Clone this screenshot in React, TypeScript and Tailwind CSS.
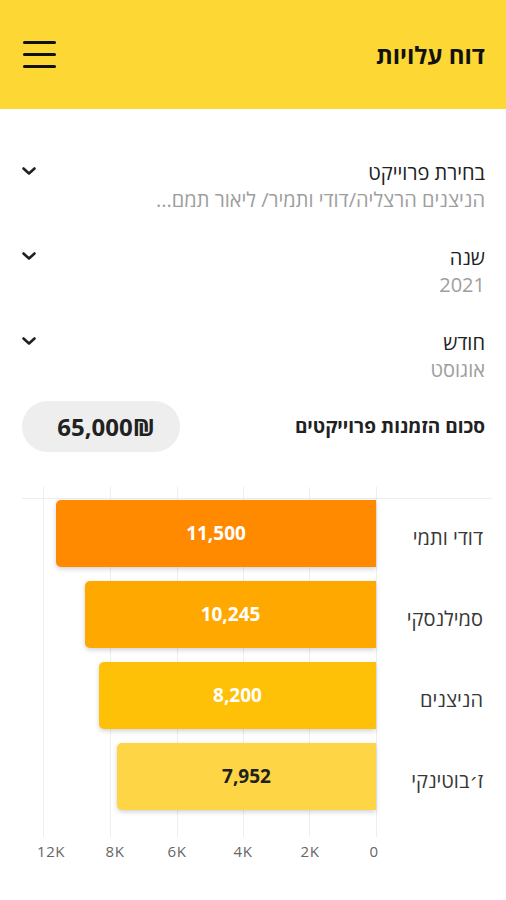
import React from "react"

interface Bar {
  label: string
  value: string
  width: number
  color: string
  textColor: string
}

const bars: Bar[] = [
  { label: "דודי ותמי", value: "11,500", width: 320, color: "bg-[#FF8A00]", textColor: "text-white" },
  { label: "סמילנסקי", value: "10,245", width: 291, color: "bg-[#FFA800]", textColor: "text-white" },
  { label: "הניצנים", value: "8,200", width: 277, color: "bg-[#FFC107]", textColor: "text-white" },
  { label: "ז׳בוטינקי", value: "7,952", width: 259, color: "bg-[#FDD545]", textColor: "text-[#212121]" },
]

// x positions inside the chart box (chart starts at page x=22)
const gridX = [21, 88, 155, 221, 287, 354]
const ticks = [
  { label: "12K", x: 29 },
  { label: "8K", x: 93 },
  { label: "6K", x: 155 },
  { label: "4K", x: 221 },
  { label: "2K", x: 288 },
  { label: "0", x: 352 },
]

const font = { fontFamily: '"Open Sans", "Noto Sans", "DejaVu Sans", sans-serif' }

function Chevron() {
  return (
    <svg width="14" height="10" viewBox="0 0 14 10" className="mt-[8px] shrink-0">
      <path d="M1.5 2.5 L7 7.5 L12.5 2.5" fill="none" stroke="#212121" strokeWidth="2.6" strokeLinecap="round" strokeLinejoin="round" />
    </svg>
  )
}

function Select({ label, value }: { label: string; value: string }) {
  return (
    <div className="flex items-start justify-between">
      <div className="flex flex-col">
        <span className="text-[20px] leading-[30px] text-[#212121]">{label}</span>
        <span className="-mt-[3px] text-[20px] leading-[30px] text-[#9E9E9E]">{value}</span>
      </div>
      <Chevron />
    </div>
  )
}

function Chart() {
  return (
    <div className="relative ml-[22px] mr-[14px] h-[380px]" dir="ltr">
      <svg className="absolute inset-0" width="470" height="350">
        <line x1="0" y1="11.5" x2="470" y2="11.5" stroke="#EEEEEE" strokeWidth="1" />
        {gridX.map((x) => (
          <line key={x} x1={x + 0.5} y1="0" x2={x + 0.5} y2="350" stroke="#EEEEEE" strokeWidth="1" />
        ))}
      </svg>
      <div className="relative flex flex-col gap-[14px] pt-[13px]">
        {bars.map((b) => (
          <div key={b.label} className="flex h-[67px] items-stretch">
            <div className="flex w-[354px] justify-end">
              <div
                className={`${b.color} ${b.textColor} flex items-center justify-center rounded-l-[5px] text-[19px] font-bold shadow-[0_2px_5px_rgba(0,0,0,0.18)]`}
                style={{ width: b.width }}
              >
                {b.value}
              </div>
            </div>
            <div className="flex flex-1 items-center justify-end pt-[8px] pr-[9px] text-[20px] text-[#383838]">
              <span dir="rtl">{b.label}</span>
            </div>
          </div>
        ))}
      </div>
      <div className="relative mt-[31px] h-5">
        {ticks.map((t) => (
          <span
            key={t.label}
            className="absolute top-0 -translate-x-1/2 text-[15px] leading-5 tracking-[0.5px] text-[#666666]"
            style={{ left: t.x }}
          >
            {t.label}
          </span>
        ))}
      </div>
    </div>
  )
}

export default function App() {
  return (
    <div className="min-h-[900px] w-[506px] bg-white" dir="rtl" style={font}>
      <header className="flex h-[109px] items-center justify-between bg-[#FDD835] pr-[21px] pl-[23px]">
        <h1 className="text-[24px] font-bold text-[#111111]">דוח עלויות</h1>
        <div className="flex w-[33px] flex-col gap-[9px]">
          <span className="h-[3px] rounded-full bg-[#111111]" />
          <span className="h-[3px] rounded-full bg-[#111111]" />
          <span className="h-[3px] rounded-full bg-[#111111]" />
        </div>
      </header>

      <main className="flex flex-col pr-[21px] pl-[22px] pt-[49px]">
        <div className="flex flex-col gap-[28px]">
          <Select label="בחירת פרוייקט" value="הניצנים הרצליה/דודי ותמיר/ ליאור תמם..." />
          <Select label="שנה" value="2021" />
          <Select label="חודש" value="אוגוסט" />
        </div>

        <div className="mt-[16px] flex items-center justify-between">
          <span className="text-[19px] font-bold text-[#212121]">סכום הזמנות פרוייקטים</span>
          <div className="flex h-[51px] w-[158px] items-center justify-center rounded-full bg-[#EEEEEE] pl-[10px]">
            <span dir="ltr" className="text-[24px] font-bold text-[#212121]">65,000₪</span>
          </div>
        </div>
      </main>

      <div className="mt-[35px]">
        <Chart />
      </div>
    </div>
  )
}
